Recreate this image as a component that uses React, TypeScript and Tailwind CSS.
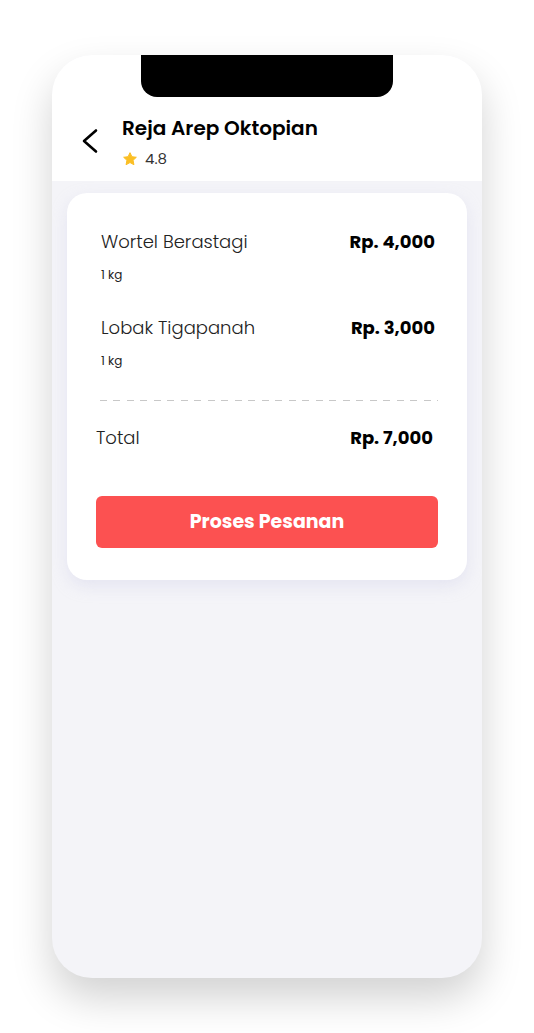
type Item = {
    name: string;
    qty: string;
    price: string;
};

const items: Item[] = [
    { name: "Wortel Berastagi", qty: "1 kg", price: "Rp. 4,000" },
    { name: "Lobak Tigapanah", qty: "1 kg", price: "Rp. 3,000" },
];

function Star() {
    return (
        <svg viewBox="0 0 24 24" className="h-[16px] w-[16px]" fill="#fbbf24" stroke="#fbbf24" strokeWidth={1.5} strokeLinejoin="round">
            <path d="M12 2.5l2.9 6.1 6.6.8-4.9 4.6 1.3 6.6L12 17.3l-5.9 3.3 1.3-6.6-4.9-4.6 6.6-.8z" />
        </svg>
    );
}

function BackArrow() {
    return (
        <svg viewBox="0 0 18 26" className="h-[26px] w-[18px]" fill="none" stroke="black" strokeWidth={2.6} strokeLinecap="round" strokeLinejoin="round">
            <polyline points="15,2.5 3,13 15,23.5" />
        </svg>
    );
}

export default function App() {
    return (
        <div className="min-h-[1033px] w-full bg-white pl-[52px] pt-[55px] font-['Poppins','Inter',sans-serif]">
            {/* phone frame */}
            <div className="relative flex h-[923px] w-[430px] flex-col overflow-hidden rounded-[40px] bg-[#f4f4f8] shadow-[0_20px_40px_rgba(0,0,0,0.18)]">
                <div className="absolute left-[89px] top-0 h-[42px] w-[252px] rounded-b-[16px] bg-black" />

                {/* header */}
                <div className="flex h-[126px] shrink-0 items-start bg-white pt-[61px]">
                    <button className="ml-[29px] mt-[12px]">
                        <BackArrow />
                    </button>
                    <div className="ml-[23px]">
                        <h1 className="text-[20px] font-semibold leading-[25px] text-black">
                            Reja Arep Oktopian
                        </h1>
                        <div className="mt-[8px] flex items-center gap-[7px]">
                            <Star />
                            <span className="text-[15px] leading-[20px] text-[#333]">4.8</span>
                        </div>
                    </div>
                </div>

                {/* order card */}
                <div className="mx-[15px] mt-[12px] rounded-[20px] bg-white px-[29px] pb-[32px] pt-[35px] shadow-[0_6px_16px_rgba(200,200,230,0.35)]">
                    {items.map((item) => (
                        <div key={item.name} className="mb-[30px] pl-[5px]">
                            <div className="flex items-center justify-between pr-[3px]">
                                <span className="text-[18px] font-light text-[#222]">{item.name}</span>
                                <span className="text-[18px] font-bold text-black">{item.price}</span>
                            </div>
                            <div className="mt-[11px] text-[12px] text-[#222]">{item.qty}</div>
                        </div>
                    ))}

                    <div className="ml-[4px] mt-[22px] h-px bg-[repeating-linear-gradient(to_right,#c8c8c8_0_7px,transparent_7px_13.5px)]" />

                    <div className="mt-[23px] flex items-center justify-between pr-[5px]">
                        <span className="text-[18px] font-light text-[#222]">Total</span>
                        <span className="text-[18px] font-bold text-black">Rp. 7,000</span>
                    </div>

                    <button className="mt-[45px] flex h-[52px] w-full items-center justify-center rounded-[6px] bg-[#fc5151] text-[19px] font-bold text-white">
                        Proses Pesanan
                    </button>
                </div>
            </div>
        </div>
    );
}
